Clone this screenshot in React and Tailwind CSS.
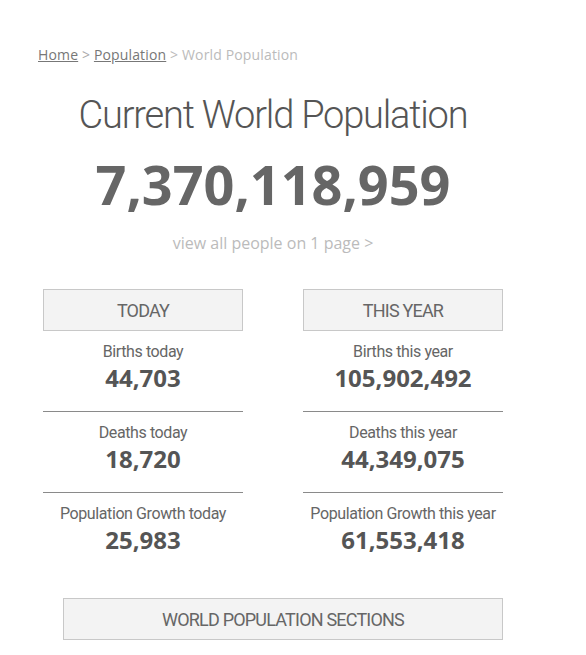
import React from 'react';

const cond = { fontFamily: 'Roboto, "Noto Sans", sans-serif' };
const open = { fontFamily: '"Open Sans", "Noto Sans", sans-serif' };

const Stat = ({ label, value, last }) => (
    <div className={`text-center pt-[11px] pb-[17px] ${last ? '' : 'border-b border-[#8a8a8a]'}`}>
        <div className="text-[16px] leading-[20px] text-[#666] tracking-[-0.4px]" style={cond}>{label}</div>
        <div className="text-[24px] leading-[32px] font-bold text-[#555]" style={open}>{value}</div>
    </div>
);

const Column = ({ title, rows }) => (
    <div className="w-[200px]">
        <div
            className="h-[42px] flex items-center justify-center bg-[#f3f3f3] border border-[#c8c8c8] text-[18px] text-[#666] tracking-[-0.8px]"
            style={cond}
        >
            {title}
        </div>
        {rows.map((r, i) => (
            <Stat key={r.label} label={r.label} value={r.value} last={i === rows.length - 1} />
        ))}
    </div>
);

const App = () => {
    return (
        <div className="w-[586px] h-[655px] bg-white overflow-hidden">
            <div className="w-[470px] ml-[38px] pt-[45px]">
                {/* Breadcrumb */}
                <div className="text-[14px] leading-[20px] text-[#777] tracking-[0.15px]" style={open}>
                    <a className="underline">Home</a>
                    <span className="text-[#aaa]"> &gt; </span>
                    <a className="underline">Population</a>
                    <span className="text-[#bbb]"> &gt; World Population</span>
                </div>

                {/* Header */}
                <h1
                    className="mt-[25px] text-center text-[38px] leading-[50px] font-light text-[#555] tracking-[-1.2px]"
                    style={cond}
                >
                    Current World Population
                </h1>
                <div className="mt-[12px] text-center text-[54px] leading-[64px] font-bold text-[#666]" style={open}>
                    7,370,118,959
                </div>
                <div className="mt-[17px] text-center text-[16px] leading-[20px] text-[#bbb]" style={open}>
                    view all people on 1 page &gt;
                </div>

                {/* Today / This year */}
                <div className="mt-[36px] flex gap-[60px] pl-[5px]">
                    <Column
                        title="TODAY"
                        rows={[
                            { label: 'Births today', value: '44,703' },
                            { label: 'Deaths today', value: '18,720' },
                            { label: 'Population Growth today', value: '25,983' },
                        ]}
                    />
                    <Column
                        title="THIS YEAR"
                        rows={[
                            { label: 'Births this year', value: '105,902,492' },
                            { label: 'Deaths this year', value: '44,349,075' },
                            { label: 'Population Growth this year', value: '61,553,418' },
                        ]}
                    />
                </div>

                {/* Sections */}
                <div
                    className="mt-[25px] ml-[25px] w-[440px] h-[42px] flex items-center justify-center bg-[#f3f3f3] border border-[#c8c8c8] text-[18px] text-[#666] tracking-[-0.8px]"
                    style={cond}
                >
                    WORLD POPULATION SECTIONS
                </div>
            </div>
        </div>
    );
};

export default App;
